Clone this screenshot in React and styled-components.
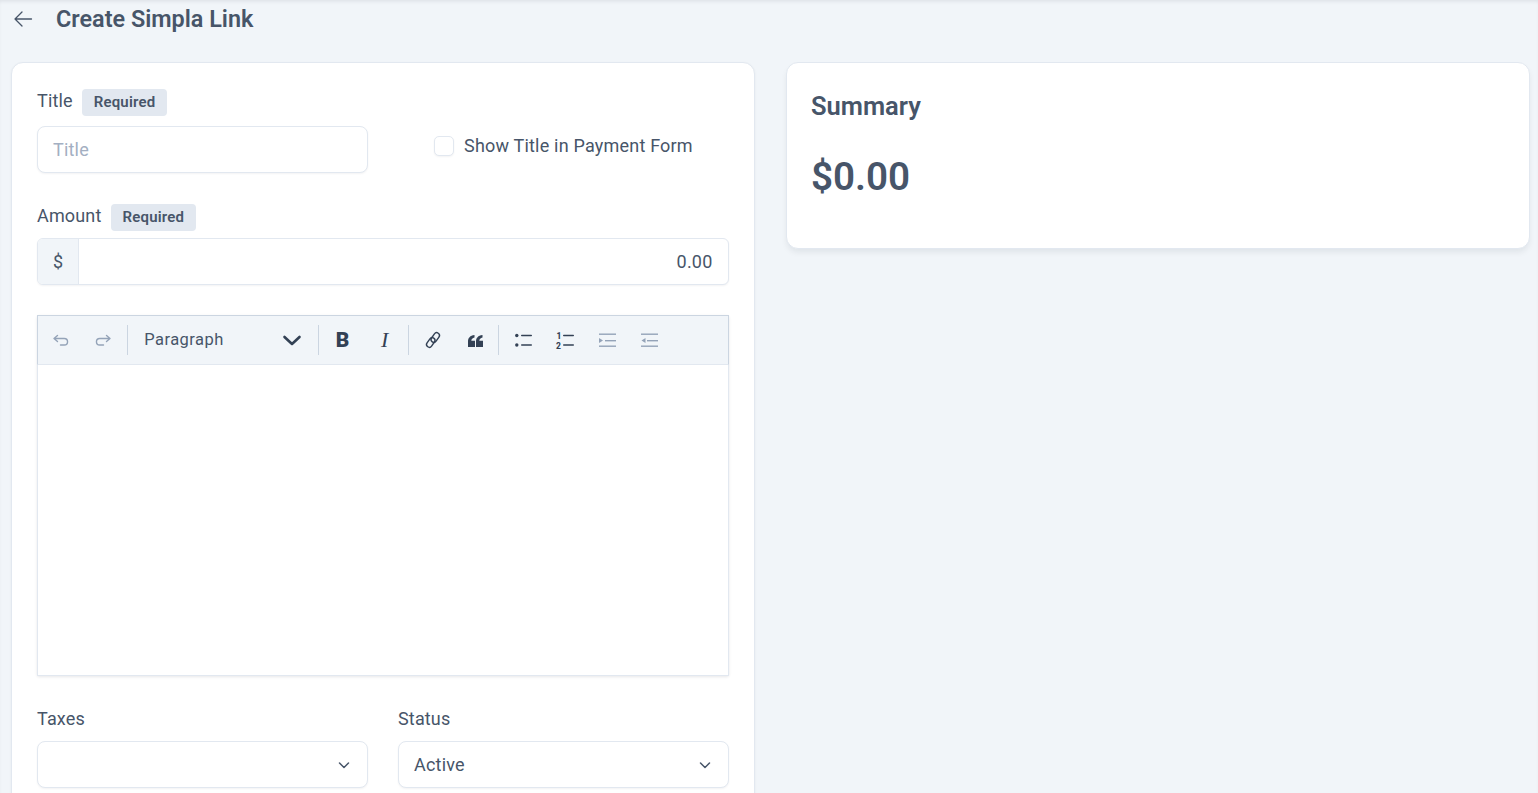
import React from "react";
import styled, { createGlobalStyle } from "styled-components";

const GlobalStyle = createGlobalStyle`
  html, body {
    margin: 0;
    height: 100%;
    overflow: hidden;
    background: #f1f5f9;
    font-family: Roboto, "Liberation Sans", sans-serif;
    color: #475569;
  }
  * { box-sizing: border-box; }
`;

const strokeIcon = {
  width: 20,
  height: 20,
  viewBox: "0 0 20 20",
  fill: "none",
  stroke: "currentColor",
  strokeWidth: 1.4,
  strokeLinecap: "round",
  strokeLinejoin: "round",
};

function BackIcon() {
  return (
    <svg width="20" height="20" viewBox="0 0 20 20" fill="none" stroke="#475569" strokeWidth="1.3" strokeLinecap="round" strokeLinejoin="round">
      <path d="M18.5 10H2M9 3 2 10l7 7" />
    </svg>
  );
}

function Chevron() {
  return (
    <svg width="16" height="16" viewBox="0 0 16 16" fill="none" stroke="#475569" strokeWidth="1.5" strokeLinecap="round" strokeLinejoin="round">
      <path d="m3.5 6 4.5 4.5L12.500 6" />
    </svg>
  );
}

function App() {
  return (
    <Page>
      <GlobalStyle />
      <Header>
        <BackButton>
          <BackIcon />
        </BackButton>
        <PageTitle>Create Simpla Link</PageTitle>
      </Header>
      <Columns>
        <Card>
          <TwoCols>
            <Field>
              <LabelRow>
                <Label>Title</Label>
                <Badge>Required</Badge>
              </LabelRow>
              <TextInput>
                <Placeholder>Title</Placeholder>
              </TextInput>
            </Field>
            <CheckRow>
              <Checkbox />
              <CheckText>Show Title in Payment Form</CheckText>
            </CheckRow>
          </TwoCols>

          <AmountField>
            <AmountLabelRow>
              <Label>Amount</Label>
              <Badge>Required</Badge>
            </AmountLabelRow>
            <InputGroup>
              <Addon>$</Addon>
              <AmountValue>0.00</AmountValue>
            </InputGroup>
          </AmountField>

          <Editor>
            <Toolbar>
              <ToolButton $muted>
                <svg {...strokeIcon}>
                  <path d="M6.500 5.500 3 8.500l3.500 3M3.500 8.500h9.800a3.200 3.200 0 0 1 0 6.500H9.500" />
                </svg>
              </ToolButton>
              <ToolButton $muted>
                <svg {...strokeIcon}>
                  <path d="m13.500 5.500 3.500 3-3.500 3M16.500 8.500H6.700a3.200 3.200 0 0 0 0 6.500h3.800" />
                </svg>
              </ToolButton>
              <Divider />
              <HeadingSelect>
                <span>Paragraph</span>
                <svg width="20" height="20" viewBox="0 0 20 20" fill="none" stroke="#334155" strokeWidth="2.600" strokeLinecap="round" strokeLinejoin="round">
                  <path d="m2.500 7 7.500 7 7.500-7" />
                </svg>
              </HeadingSelect>
              <Divider />
              <ToolButton>
                <BoldGlyph>B</BoldGlyph>
              </ToolButton>
              <ToolButton>
                <ItalicGlyph>I</ItalicGlyph>
              </ToolButton>
              <Divider />
              <ToolButton>
                <svg {...strokeIcon}>
                  <rect x="9.500" y="2.300" width="5.500" height="10.500" rx="2.750" transform="rotate(35 12.250 7.550)" />
                  <rect x="5" y="7.200" width="5.500" height="10.500" rx="2.750" transform="rotate(35 7.750 12.450)" />
                </svg>
              </ToolButton>
              <ToolButton>
                <svg width="20" height="20" viewBox="0 0 20 20" fill="#334155">
                  <path d="M3 17v-5.500C3 8 5 5.500 9.500 5v2.500c-2 .500-3 1.500-3.200 3.200H10V17H3Z" />
                  <path d="M11 17v-5.500C11 8 13 5.500 17.500 5v2.500c-2 .500-3 1.500-3.200 3.200H18V17h-7Z" />
                </svg>
              </ToolButton>
              <Divider />
              <ToolButton>
                <svg width="20" height="20" viewBox="0 0 20 20" fill="#334155">
                  <circle cx="3.800" cy="5.500" r="1.700" />
                  <circle cx="3.800" cy="15" r="1.700" />
                  <rect x="8" y="4.800" width="11" height="1.500" rx=".7" />
                  <rect x="8" y="14.300" width="11" height="1.500" rx=".7" />
                </svg>
              </ToolButton>
              <ToolButton>
                <svg width="20" height="20" viewBox="0 0 20 20" fill="#334155">
                  <text x="1.500" y="9" fontSize="8.500" fontWeight="800" fontFamily="Roboto, sans-serif">1</text>
                  <text x="1" y="19" fontSize="8.500" fontWeight="800" fontFamily="Roboto, sans-serif">2</text>
                  <rect x="8" y="4.800" width="11" height="1.500" rx=".7" />
                  <rect x="8" y="14.300" width="11" height="1.500" rx=".7" />
                </svg>
              </ToolButton>
              <ToolButton $muted>
                <svg width="20" height="20" viewBox="0 0 20 20" fill="#94a3b8">
                  <rect x="2" y="3.500" width="17" height="1.400" />
                  <rect x="8" y="10" width="11" height="1.400" />
                  <rect x="2" y="15.500" width="17" height="1.400" />
                  <path d="M2 8v5l4-2.500L2 8Z" />
                </svg>
              </ToolButton>
              <ToolButton $muted>
                <svg width="20" height="20" viewBox="0 0 20 20" fill="#94a3b8">
                  <rect x="2" y="3.500" width="17" height="1.400" />
                  <rect x="8" y="10" width="11" height="1.400" />
                  <rect x="2" y="15.500" width="17" height="1.400" />
                  <path d="M6.500 8v5l-4-2.500 4-2.500Z" />
                </svg>
              </ToolButton>
            </Toolbar>
            <EditorBody />
          </Editor>

          <SelectsRow>
            <Field>
              <PlainLabel>Taxes</PlainLabel>
              <SelectBox>
                <span />
                <Chevron />
              </SelectBox>
            </Field>
            <Field>
              <PlainLabel>Status</PlainLabel>
              <SelectBox>
                <span>Active</span>
                <Chevron />
              </SelectBox>
            </Field>
          </SelectsRow>
        </Card>

        <SummaryCard>
          <SummaryTitle>Summary</SummaryTitle>
          <SummaryAmount>$0.00</SummaryAmount>
        </SummaryCard>
      </Columns>
    </Page>
  );
}

export default App;

const Page = styled.div`
  height: 793px;
  overflow: hidden;
  padding: 0 8px 0 11px;
  box-shadow: inset 0 3px 4px -2px rgba(15, 23, 42, 0.1);
`;

const Header = styled.header`
  display: flex;
  align-items: center;
  height: 38px;
  margin-bottom: 24px;
`;

const BackButton = styled.div`
  display: flex;
  width: 45px;
  padding-left: 2px;
`;

const PageTitle = styled.h1`
  margin: 0;
  font-size: 23.400px;
  font-weight: 600;
  color: #475569;
`;

const Columns = styled.div`
  display: grid;
  grid-template-columns: 743.500px 744.500px;
  gap: 31px;
  align-items: start;
`;

const Card = styled.section`
  background: #fff;
  border: 1px solid #e2e8f0;
  border-radius: 12px;
  padding: 26px 25px 40px 25px;
  box-shadow: 0 1px 3px rgba(15, 23, 42, 0.05);
`;

const TwoCols = styled.div`
  display: grid;
  grid-template-columns: 331px 331px;
  gap: 30px;
`;

const Field = styled.div`
  display: flex;
  flex-direction: column;
  min-width: 0;
`;

const AmountField = styled(Field)`
  margin-top: 31px;
`;

const LabelRow = styled.div`
  display: flex;
  align-items: center;
  gap: 9.500px;
  height: 27px;
  margin-bottom: 10px;
`;

const AmountLabelRow = styled(LabelRow)`
  margin-bottom: 7px;
`;

const Label = styled.label`
  font-size: 18px;
  letter-spacing: 0.15px;
  color: #475569;
  position: relative;
  top: -2px;
`;

const PlainLabel = styled(Label)`
  top: 1px;
  height: 20px;
  line-height: 20px;
  margin-bottom: 13px;
`;

const Badge = styled.span`
  display: inline-flex;
  align-items: center;
  height: 27px;
  padding: 0 11.500px 1px;
  border-radius: 4px;
  background: #e2e8f0;
  color: #475569;
  font-size: 15px;
  font-weight: 600;
  letter-spacing: 0.2px;
`;

const TextInput = styled.div`
  display: flex;
  align-items: center;
  height: 47px;
  padding: 0 15px;
  background: #fff;
  border: 1px solid #e2e8f0;
  border-radius: 8px;
  box-shadow: 0 1px 2px rgba(15, 23, 42, 0.05);
  font-size: 18px;
`;

const Placeholder = styled.span`
  color: #a3afc2;
  letter-spacing: 0.2px;
`;

const CheckRow = styled.div`
  display: flex;
  align-items: center;
  gap: 10px;
  padding-left: 36px;
  height: 20px;
  margin-top: 47px;
`;

const Checkbox = styled.span`
  width: 20px;
  height: 20px;
  border: 1px solid #e2e8f0;
  border-radius: 5px;
  background: #fff;
  box-shadow: 0 1px 2px rgba(15, 23, 42, 0.05);
`;

const CheckText = styled.span`
  font-size: 18px;
  letter-spacing: 0.2px;
  color: #475569;
  padding-bottom: 2px;
`;

const InputGroup = styled.div`
  display: flex;
  height: 47px;
  background: #fff;
  border: 1px solid #e2e8f0;
  border-radius: 6px;
  overflow: hidden;
  box-shadow: 0 1px 2px rgba(15, 23, 42, 0.05);
`;

const Addon = styled.div`
  display: flex;
  align-items: center;
  justify-content: center;
  width: 41px;
  background: #f1f5f9;
  border-right: 1px solid #e2e8f0;
  font-size: 18px;
`;

const AmountValue = styled.div`
  flex: 1;
  display: flex;
  align-items: center;
  justify-content: flex-end;
  padding-right: 15px;
  font-size: 18px;
  letter-spacing: 0.2px;
`;

const Editor = styled.div`
  margin-top: 30px;
  height: 361px;
  display: flex;
  flex-direction: column;
  border-radius: 2px;
  box-shadow: 0 1px 3px rgba(15, 23, 42, 0.1);
`;

const Toolbar = styled.div`
  display: flex;
  align-items: center;
  height: 50px;
  padding: 0 2px;
  background: #f1f5f9;
  border: 1px solid #cbd5e1;
  border-bottom-color: #e2e8f0;
`;

const ToolButton = styled.div`
  display: flex;
  align-items: center;
  justify-content: center;
  width: 42px;
  height: 36px;
  flex: none;
  color: ${(p) => (p.$muted ? "#94a3b8" : "#334155")};
`;

const BoldGlyph = styled.span`
  font-size: 21px;
  font-weight: 900;
  color: #334155;
`;

const ItalicGlyph = styled.span`
  font-family: "Liberation Serif", serif;
  font-style: italic;
  font-size: 22px;
  color: #334155;
`;

const Divider = styled.span`
  flex: none;
  width: 1px;
  height: 30px;
  margin: 0 2.650px;
  background: #cbd5e1;
`;

const HeadingSelect = styled.div`
  display: flex;
  align-items: center;
  justify-content: space-between;
  width: 185px;
  padding: 0 13px 2px 14px;
  flex: none;
  font-size: 16.500px;
  letter-spacing: 0.450px;
  color: #475569;

  svg {
    position: relative;
    top: 1px;
  }
`;

const EditorBody = styled.div`
  flex: 1;
  background: #fff;
  border: 1px solid #e2e8f0;
  border-top: 0;
`;

const SelectsRow = styled(TwoCols)`
  margin-top: 32px;
`;

const SelectBox = styled.div`
  display: flex;
  align-items: center;
  justify-content: space-between;
  height: 47px;
  padding: 0 15px;
  background: #fff;
  border: 1px solid #e2e8f0;
  border-radius: 8px;
  box-shadow: 0 1px 2px rgba(15, 23, 42, 0.05);
  font-size: 18px;
  letter-spacing: 0.2px;
  color: #475569;
`;

const SummaryCard = styled.aside`
  height: 187px;
  padding: 26px 25px 26px 24.500px;
  background: #fff;
  border: 1px solid #e2e8f0;
  border-radius: 12px;
  box-shadow: 0 4px 6px -1px rgba(15, 23, 42, 0.08);
`;

const SummaryTitle = styled.h2`
  margin: 0;
  font-size: 25.500px;
  font-weight: 600;
  line-height: 34px;
  color: #475569;
`;

const SummaryAmount = styled.div`
  margin-top: 29px;
  font-size: 38.600px;
  font-weight: 600;
  line-height: 50px;
  color: #475569;
`;
